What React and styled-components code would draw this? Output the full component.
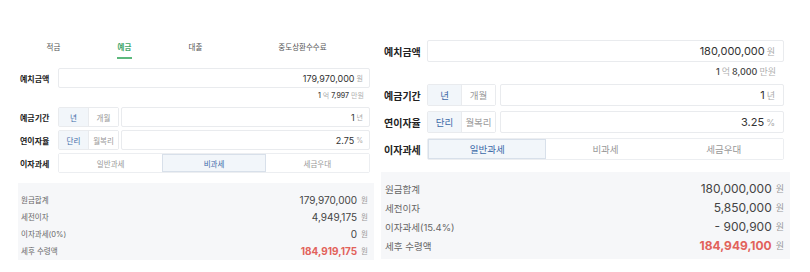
import * as React from "react";
import styled, { createGlobalStyle } from "styled-components";

const GlobalStyle = createGlobalStyle`
  html, body {
    margin: 0;
    padding: 0;
    background: #ffffff;
  }
  body {
    font-family: "Inter", "Noto Sans CJK KR", sans-serif;
    color: #222;
  }
`;

const small = {
  width: 356,
  top: 35,
  labelPad: 2,
  labelWidth: 38,
  rightPad: 4,
  rowH: 20,
  rowGap: 3,
  labelFont: 8,
  valueFont: 9,
  unitFont: 7,
  btnFont: 7.5,
  btnW: 29,
  fieldGap: 2,
  inputPad: 6,
  subH: 14,
  subTop: 0,
  subBottom: 5,
  subFont: 7,
  boxTop: 10,
  boxPad: "8px 6px 1px 3px",
  resRowH: 17,
  resLabelFont: 7.5,
  resValueFont: 10,
  resUnitFont: 7.5,
};

const large = {
  width: 409,
  top: 40,
  labelPad: 3,
  labelWidth: 43,
  rightPad: 6,
  rowH: 22,
  rowGap: 5,
  labelFont: 10,
  valueFont: 11,
  unitFont: 9,
  btnFont: 9.5,
  btnW: 33,
  fieldGap: 4,
  inputPad: 8,
  subH: 14,
  subTop: 2,
  subBottom: 6,
  subFont: 9,
  boxTop: 12,
  boxPad: "7px 6px 4px 4px",
  resRowH: 19,
  resLabelFont: 9.5,
  resValueFont: 12,
  resUnitFont: 9,
};

const Calculator = ({ m, tabs, amount, man, period, rate, tax, results }) => (
  <Panel $m={m}>
    {tabs && (
      <Tabs>
        {tabs.map((t, i) => (
          <Tab key={t} $active={i === 1} $grow={i === tabs.length - 1}>
            <span>{t}</span>
          </Tab>
        ))}
      </Tabs>
    )}
    <Form $m={m}>
      <Row $m={m}>
        <Label $m={m}>예치금액</Label>
        <Input $m={m}>
          <b>{amount}</b>
          <Unit $m={m}>원</Unit>
        </Input>
      </Row>
      <Sub $m={m}>
        <b>1</b>
        <em>억</em>
        <b>{man}</b>
        <em>만원</em>
      </Sub>
      <Rows $m={m}>
        <Row $m={m}>
          <Label $m={m}>예금기간</Label>
          <Field $m={m}>
            <Toggle>
              <ToggleBtn $m={m} $on>
                년
              </ToggleBtn>
              <ToggleBtn $m={m}>개월</ToggleBtn>
            </Toggle>
            <Input $m={m}>
              <b>{period}</b>
              <Unit $m={m}>년</Unit>
            </Input>
          </Field>
        </Row>
        <Row $m={m}>
          <Label $m={m}>연이자율</Label>
          <Field $m={m}>
            <Toggle>
              <ToggleBtn $m={m} $on>
                단리
              </ToggleBtn>
              <ToggleBtn $m={m}>월복리</ToggleBtn>
            </Toggle>
            <Input $m={m}>
              <b>{rate}</b>
              <Unit $m={m}>%</Unit>
            </Input>
          </Field>
        </Row>
        <Row $m={m}>
          <Label $m={m}>이자과세</Label>
          <Segments>
            {["일반과세", "비과세", "세금우대"].map((s, i) => (
              <Segment key={s} $m={m} $on={i === tax}>
                {s}
              </Segment>
            ))}
          </Segments>
        </Row>
      </Rows>
    </Form>
    <Result $m={m}>
      {results.map((r) => (
        <ResultRow key={r.label} $m={m}>
          <span>{r.label}</span>
          <ResultValue $m={m} $strong={r.strong}>
            <b>{r.value}</b>
            <i>원</i>
          </ResultValue>
        </ResultRow>
      ))}
    </Result>
  </Panel>
);

const App = () => (
  <>
    <GlobalStyle />
    <Page>
      <Calculator
        m={small}
        tabs={["적금", "예금", "대출", "중도상환수수료"]}
        amount="179,970,000"
        man="7,997"
        period="1"
        rate="2.75"
        tax={1}
        results={[
          { label: "원금합계", value: "179,970,000" },
          { label: "세전이자", value: "4,949,175" },
          { label: "이자과세(0%)", value: "0" },
          { label: "세후 수령액", value: "184,919,175", strong: true },
        ]}
      />
      <Calculator
        m={large}
        amount="180,000,000"
        man="8,000"
        period="1"
        rate="3.25"
        tax={0}
        results={[
          { label: "원금합계", value: "180,000,000" },
          { label: "세전이자", value: "5,850,000" },
          { label: "이자과세(15.4%)", value: "- 900,900" },
          { label: "세후 수령액", value: "184,949,100", strong: true },
        ]}
      />
    </Page>
  </>
);

const Page = styled.div`
  width: 810px;
  height: 272px;
  display: flex;
  flex-direction: row;
  align-items: flex-start;
  padding-left: 18px;
  gap: 7px;
  box-sizing: border-box;
  overflow: hidden;
`;

const Panel = styled.div`
  width: ${(p) => p.$m.width}px;
  margin-top: ${(p) => p.$m.top}px;
  display: flex;
  flex-direction: column;
`;

const Tabs = styled.div`
  display: flex;
  flex-direction: row;
  height: 24px;
  margin-bottom: 9px;
`;

const Tab = styled.div`
  flex: ${(p) => (p.$grow ? "1" : "0 0 71px")};
  display: flex;
  justify-content: center;
  font-size: 7.5px;
  color: ${(p) => (p.$active ? "#3fa66a" : "#555")};
  font-weight: ${(p) => (p.$active ? 600 : 400)};

  span {
    display: flex;
    align-items: center;
    padding: 0 1px;
    height: 22px;
    border-bottom: 2px solid ${(p) => (p.$active ? "#5cb87c" : "transparent")};
  }
`;

const Form = styled.div`
  padding: 0 ${(p) => p.$m.rightPad}px 0 ${(p) => p.$m.labelPad}px;
  display: flex;
  flex-direction: column;
`;

const Rows = styled.div`
  display: flex;
  flex-direction: column;
  gap: ${(p) => p.$m.rowGap}px;
`;

const Row = styled.div`
  display: flex;
  flex-direction: row;
  align-items: stretch;
  height: ${(p) => p.$m.rowH}px;
`;

const Label = styled.div`
  flex: 0 0 ${(p) => p.$m.labelWidth}px;
  display: flex;
  align-items: center;
  font-size: ${(p) => p.$m.labelFont}px;
  font-weight: 700;
  color: #222;
`;

const Field = styled.div`
  flex: 1;
  display: flex;
  flex-direction: row;
  gap: ${(p) => p.$m.fieldGap}px;
`;

const Input = styled.div`
  flex: 1;
  display: flex;
  align-items: center;
  justify-content: flex-end;
  gap: 2px;
  padding-right: ${(p) => p.$m.inputPad}px;
  border: 1px solid #e9ebee;
  border-radius: 2px;
  font-size: ${(p) => p.$m.valueFont}px;
  color: #333;

  b {
    font-weight: 400;
  }
`;

const Unit = styled.span`
  font-size: ${(p) => p.$m.unitFont}px;
  color: #aaa;
`;

const Sub = styled.div`
  height: ${(p) => p.$m.subH}px;
  margin: ${(p) => p.$m.subTop}px 0 ${(p) => p.$m.subBottom}px;
  display: flex;
  align-items: center;
  justify-content: flex-end;
  gap: 2px;
  padding-right: ${(p) => p.$m.inputPad}px;
  font-size: ${(p) => p.$m.subFont}px;

  b {
    font-weight: 500;
    color: #444;
  }

  em {
    font-style: normal;
    color: #b0b0b0;
  }
`;

const Toggle = styled.div`
  display: flex;
  flex-direction: row;
  border: 1px solid #e9ebee;
  border-radius: 2px;
`;

const ToggleBtn = styled.div`
  width: ${(p) => p.$m.btnW}px;
  display: flex;
  align-items: center;
  justify-content: center;
  font-size: ${(p) => p.$m.btnFont}px;
  color: ${(p) => (p.$on ? "#3d6aa8" : "#999")};
  background: ${(p) => (p.$on ? "#f2f6fa" : "#fff")};
  border-right: 1px solid #e9ebee;

  &:last-child {
    border-right: none;
  }
`;

const Segments = styled.div`
  flex: 1;
  display: grid;
  grid-template-columns: repeat(3, 1fr);
  border: 1px solid #eceef1;
  border-radius: 2px;
`;

const Segment = styled.div`
  display: flex;
  align-items: center;
  justify-content: center;
  font-size: ${(p) => p.$m.btnFont}px;
  color: ${(p) => (p.$on ? "#3d6aa8" : "#999")};
  background: ${(p) => (p.$on ? "#f2f6fa" : "#fff")};
  box-shadow: ${(p) => (p.$on ? "inset 0 0 0 1px #d8e0ea" : "none")};
`;

const Result = styled.div`
  margin-top: ${(p) => p.$m.boxTop}px;
  padding: ${(p) => p.$m.boxPad};
  background: #f6f7f9;
  display: flex;
  flex-direction: column;
`;

const ResultRow = styled.div`
  height: ${(p) => p.$m.resRowH}px;
  display: flex;
  flex-direction: row;
  align-items: center;
  justify-content: space-between;
  font-size: ${(p) => p.$m.resLabelFont}px;
  color: #666;
`;

const ResultValue = styled.div`
  display: flex;
  align-items: center;
  gap: 4px;

  b {
    font-size: ${(p) => p.$m.resValueFont}px;
    font-weight: ${(p) => (p.$strong ? 700 : 400)};
    color: ${(p) => (p.$strong ? "#e2625b" : "#444")};
  }

  i {
    font-style: normal;
    font-size: ${(p) => p.$m.resUnitFont}px;
    color: #999;
  }
`;

export default App;
